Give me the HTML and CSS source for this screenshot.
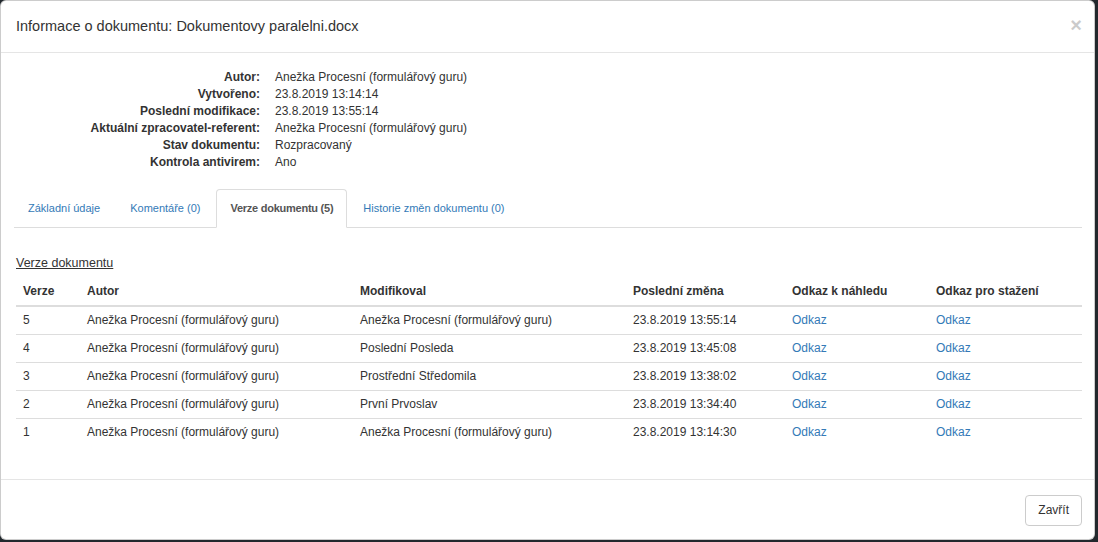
FILE: index.html
```html
<!DOCTYPE html>
<html lang="cs">
<head>
    <meta charset="UTF-8">
    <meta name="viewport" content="width=device-width, initial-scale=1.0">
    <title>Informace o dokumentu</title>
    <link rel="stylesheet" href="styles.css">
</head>
<body>

    <div class="modal">
        <!-- Header -->
        <div class="modal-header">
            <h4 class="modal-title">Informace o dokumentu: Dokumentovy paralelni.docx</h4>
            <button class="close" type="button">&times;</button>
        </div>

        <!-- Body -->
        <div class="modal-body">
            <dl class="doc-info">
                <dt>Autor:</dt>
                <dd>Anežka Procesní (formulářový guru)</dd>
                <dt>Vytvořeno:</dt>
                <dd>23.8.2019 13:14:14</dd>
                <dt>Poslední modifikace:</dt>
                <dd>23.8.2019 13:55:14</dd>
                <dt>Aktuální zpracovatel-referent:</dt>
                <dd>Anežka Procesní (formulářový guru)</dd>
                <dt>Stav dokumentu:</dt>
                <dd>Rozpracovaný</dd>
                <dt>Kontrola antivirem:</dt>
                <dd>Ano</dd>
            </dl>

            <!-- Tabs -->
            <ul class="nav-tabs">
                <li><a href="#">Základní údaje</a></li>
                <li><a href="#">Komentáře (0)</a></li>
                <li class="active"><a href="#">Verze dokumentu (5)</a></li>
                <li><a href="#">Historie změn dokumentu (0)</a></li>
            </ul>

            <div class="tab-pane">
                <h5 class="section-title">Verze dokumentu</h5>
                <table class="versions">
                    <colgroup>
                        <col class="col-ver">
                        <col class="col-person">
                        <col class="col-person">
                        <col class="col-date">
                        <col class="col-preview">
                        <col>
                    </colgroup>
                    <thead>
                        <tr>
                            <th>Verze</th>
                            <th>Autor</th>
                            <th>Modifikoval</th>
                            <th>Poslední změna</th>
                            <th>Odkaz k náhledu</th>
                            <th>Odkaz pro stažení</th>
                        </tr>
                    </thead>
                    <tbody>
                        <tr>
                            <td>5</td>
                            <td>Anežka Procesní (formulářový guru)</td>
                            <td>Anežka Procesní (formulářový guru)</td>
                            <td>23.8.2019 13:55:14</td>
                            <td><a href="#">Odkaz</a></td>
                            <td><a href="#">Odkaz</a></td>
                        </tr>
                        <tr>
                            <td>4</td>
                            <td>Anežka Procesní (formulářový guru)</td>
                            <td>Poslední Posleda</td>
                            <td>23.8.2019 13:45:08</td>
                            <td><a href="#">Odkaz</a></td>
                            <td><a href="#">Odkaz</a></td>
                        </tr>
                        <tr>
                            <td>3</td>
                            <td>Anežka Procesní (formulářový guru)</td>
                            <td>Prostřední Středomila</td>
                            <td>23.8.2019 13:38:02</td>
                            <td><a href="#">Odkaz</a></td>
                            <td><a href="#">Odkaz</a></td>
                        </tr>
                        <tr>
                            <td>2</td>
                            <td>Anežka Procesní (formulářový guru)</td>
                            <td>První Prvoslav</td>
                            <td>23.8.2019 13:34:40</td>
                            <td><a href="#">Odkaz</a></td>
                            <td><a href="#">Odkaz</a></td>
                        </tr>
                        <tr>
                            <td>1</td>
                            <td>Anežka Procesní (formulářový guru)</td>
                            <td>Anežka Procesní (formulářový guru)</td>
                            <td>23.8.2019 13:14:30</td>
                            <td><a href="#">Odkaz</a></td>
                            <td><a href="#">Odkaz</a></td>
                        </tr>
                    </tbody>
                </table>
            </div>
        </div>

        <!-- Footer -->
        <div class="modal-footer">
            <button class="btn" type="button">Zavřít</button>
        </div>
    </div>

</body>
</html>
```

FILE: styles.css
```css
/* Page */
body{
    margin: 0;
    background-color: #22282d;
    font-family: "Liberation Sans", Arial, sans-serif;
    font-size: 12px;
    line-height: 1.42857;
    color: #333;
}
a{
    color: #337ab7;
    text-decoration: none;
}

/* Modal */
.modal{
    width: 1093px;
    margin: 0;
    background-color: #fff;
    border: 1px solid rgba(0, 0, 0, 0.2);
    border-radius: 6px;
}
.modal-header{
    display: flex;
    justify-content: space-between;
    align-items: flex-start;
    padding: 15px 12px 15px 15px;
    border-bottom: 1px solid #e5e5e5;
}
.modal-title{
    margin: 0;
    font-size: 14.5px;
    font-weight: normal;
    line-height: 1.42857;
}
.close{
    padding: 0;
    margin-top: -1px;
    border: 0;
    background: transparent;
    font-family: inherit;
    font-size: 20px;
    font-weight: bold;
    line-height: 1;
    color: #000;
    opacity: 0.2;
    text-shadow: 0 1px 0 #fff;
    cursor: pointer;
}
.modal-body{
    padding: 16px 12px 15px 15px;
}
.modal-footer{
    display: flex;
    justify-content: flex-end;
    padding: 15px 12px 13px 15px;
    border-top: 1px solid #e5e5e5;
}

/* Document info */
.doc-info{
    display: grid;
    grid-template-columns: 244px 1fr;
    column-gap: 15px;
    margin: 0 0 17px;
}
.doc-info dt{
    font-weight: bold;
    text-align: right;
}
.doc-info dd{
    margin: 0;
}

/* Tabs */
.nav-tabs{
    display: flex;
    list-style: none;
    margin: 0 0 0 -2px;
    padding: 0;
    border-bottom: 1px solid #ddd;
}
.nav-tabs li{
    margin-right: 2px;
    margin-bottom: -1px;
}
.nav-tabs a{
    display: block;
    padding: 10px 13px;
    font-size: 11px;
    line-height: 17px;
    border: 1px solid transparent;
    border-radius: 4px 4px 0 0;
}
.nav-tabs .active a{
    color: #555;
    font-weight: bold;
    letter-spacing: -0.25px;
    background-color: #fff;
    border-color: #ddd #ddd transparent;
}

/* Versions table */
.section-title{
    margin: 26px 0 6px;
    font-size: 12.5px;
    font-weight: normal;
    line-height: 18px;
    text-decoration: underline;
}
.versions{
    width: 100%;
    margin-bottom: 18px;
    table-layout: fixed;
    border-collapse: collapse;
}
.col-ver{
    width: 64px;
}
.col-person{
    width: 273px;
}
.col-date{
    width: 159px;
}
.col-preview{
    width: 144px;
}
.versions th,
.versions td{
    padding: 5px 5px 5px 7px;
    text-align: left;
    vertical-align: top;
}
.versions th{
    border-bottom: 2px solid #ddd;
}
.versions tbody tr + tr td{
    border-top: 1px solid #ddd;
}

/* Button */
.btn{
    padding: 6px 12px;
    font-family: inherit;
    font-size: 12px;
    line-height: 17px;
    color: #333;
    background-color: #fff;
    border: 1px solid #ccc;
    border-radius: 4px;
    cursor: pointer;
}
```
